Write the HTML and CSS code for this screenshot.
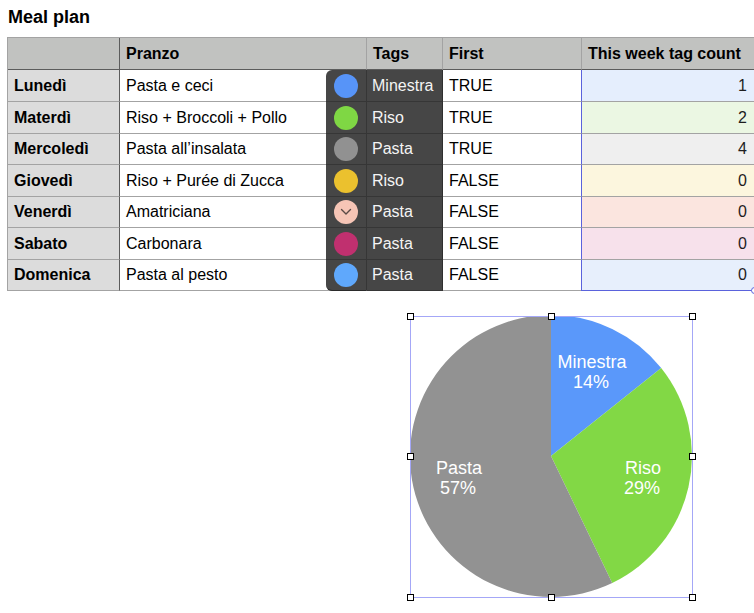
FILE: index.html
```html
<!DOCTYPE html>
<html lang="it">
<head>
<meta charset="utf-8">
<title>Meal plan</title>
<link rel="stylesheet" href="styles.css">
</head>
<body>
<div class="page">
  <h1 class="title">Meal plan</h1>
  <table class="sheet">
    <colgroup>
      <col class="c-day"><col class="c-pranzo"><col class="c-tags"><col class="c-first"><col class="c-count">
    </colgroup>
    <thead>
      <tr class="r-head">
        <th class="day"></th>
        <th>Pranzo</th>
        <th>Tags</th>
        <th class="first">First</th>
        <th class="count">This week tag count</th>
      </tr>
    </thead>
    <tbody>
      <tr class="r32">
        <th class="day">Lunedì</th>
        <td>Pasta e ceci</td>
        <td class="tag"><span class="sw sw-top"><i class="dot" style="background:#5794f8"></i></span>Minestra</td>
        <td class="first">TRUE</td>
        <td class="count" style="background:#e5eefd">1</td>
      </tr>
      <tr class="r32">
        <th class="day">Materdì</th>
        <td>Riso + Broccoli + Pollo</td>
        <td class="tag"><span class="sw"><i class="dot" style="background:#7fd744"></i></span>Riso</td>
        <td class="first">TRUE</td>
        <td class="count" style="background:#ebf7e3">2</td>
      </tr>
      <tr class="r31">
        <th class="day">Mercoledì</th>
        <td>Pasta all’insalata</td>
        <td class="tag"><span class="sw"><i class="dot" style="background:#919191"></i></span>Pasta</td>
        <td class="first">TRUE</td>
        <td class="count" style="background:#efefef">4</td>
      </tr>
      <tr class="r32">
        <th class="day">Giovedì</th>
        <td>Riso + Purée di Zucca</td>
        <td class="tag"><span class="sw"><i class="dot" style="background:#ebc12e"></i></span>Riso</td>
        <td class="first">FALSE</td>
        <td class="count" style="background:#fcf6de">0</td>
      </tr>
      <tr class="r31">
        <th class="day">Venerdì</th>
        <td>Amatriciana</td>
        <td class="tag"><span class="sw"><i class="dot" style="background:#f6c5b6"><svg class="chev" viewBox="0 0 12 8" width="12" height="8"><path d="M1.5 1.5 L6 6 L10.5 1.5" fill="none" stroke="#5a4a46" stroke-width="1.4" stroke-linecap="round" stroke-linejoin="round"/></svg></i></span>Pasta</td>
        <td class="first">FALSE</td>
        <td class="count" style="background:#fbe5df">0</td>
      </tr>
      <tr class="r32">
        <th class="day">Sabato</th>
        <td>Carbonara</td>
        <td class="tag"><span class="sw"><i class="dot" style="background:#c0306f"></i></span>Pasta</td>
        <td class="first">FALSE</td>
        <td class="count" style="background:#f7e1eb">0</td>
      </tr>
      <tr class="r31">
        <th class="day">Domenica</th>
        <td>Pasta al pesto</td>
        <td class="tag"><span class="sw sw-bottom"><i class="dot" style="background:#5fa8fc"></i></span>Pasta</td>
        <td class="first">FALSE</td>
        <td class="count count-last" style="background:#e7effc">0<span class="sel-knob"></span></td>
      </tr>
    </tbody>
  </table>

  <div class="chart">
    <svg class="pie" viewBox="0 0 283 282" width="283" height="282">
      <path d="M141 140 L141 -1 A141 141 0 0 1 251.2 52.1 Z" fill="#5a98fa"/>
      <path d="M141 140 L251.2 52.1 A141 141 0 0 1 202.2 267 Z" fill="#82d845"/>
      <path d="M141 140 L202.2 267 A141 141 0 1 1 141 -1 Z" fill="#929292"/>
      <g class="lbl">
        <text x="182" y="52">Minestra</text>
        <text x="181" y="72">14%</text>
        <text x="233" y="158">Riso</text>
        <text x="232" y="178">29%</text>
        <text x="49" y="158">Pasta</text>
        <text x="48" y="178">57%</text>
      </g>
    </svg>
    <div class="frame"></div>
    <span class="h h-tl"></span><span class="h h-tc"></span><span class="h h-tr"></span>
    <span class="h h-ml"></span><span class="h h-mr"></span>
    <span class="h h-bl"></span><span class="h h-bc"></span><span class="h h-br"></span>
  </div>
</div>
</body>
</html>
```

FILE: styles.css
```css
html, body {
  margin: 0;
  padding: 0;
  background: #ffffff;
  overflow: hidden;
}
body {
  width: 754px;
  height: 613px;
  font-family: "Liberation Sans", Arial, Helvetica, sans-serif;
  color: #000;
}
.page {
  padding: 7px 0 0 7px;
}
.title {
  margin: 0 0 10px 1px;
  font-size: 18px;
  line-height: 20px;
  font-weight: bold;
}

.sheet {
  table-layout: fixed;
  border-collapse: separate;
  border-spacing: 0;
  width: 749px;
  border-top: 1px solid #a3a3a3;
  border-left: 1px solid #a3a3a3;
  font-size: 16px;
}
.c-day { width: 112px; }
.c-pranzo { width: 247px; }
.c-tags { width: 76px; }
.c-first { width: 138px; }
.c-count { width: 175px; }

.sheet th, .sheet td {
  padding: 0 6px;
  border-right: 1px solid #a3a3a3;
  border-bottom: 1px solid #a3a3a3;
  white-space: nowrap;
  overflow: visible;
  text-align: left;
  vertical-align: middle;
  line-height: 18px;
}
.r-head { height: 32px; }
.r32 { height: 32px; }
.r31 { height: 31px; }

.r-head th {
  background: #c1c2c0;
  font-weight: bold;
  border-bottom-color: #5c5c5c;
}
.sheet th.day {
  background: #dcdcdc;
  font-weight: bold;
  border-right-color: #5c5c5c;
}
.r-head th.day {
  background: #c1c2c0;
}
.sheet .first {
  border-right: none;
}
.sheet .count {
  border-left: 1px solid #a3a3a3;
}
.sheet th.count {
  padding-left: 6px;
  text-align: left;
}
.sheet td.count {
  border-left-color: #5a62dc;
  text-align: right;
  padding-right: 8px;
  color: #1e1e1e;
}
.sheet td.count-last {
  border-bottom-color: #5a62dc;
  position: relative;
}
.sel-knob {
  position: absolute;
  right: -3px;
  bottom: -4px;
  width: 5px;
  height: 5px;
  border: 1px solid #5a62dc;
  border-radius: 50%;
  background: #fff;
}

.sheet td.tag {
  position: relative;
  background: #464646;
  color: #f4f4f4;
  border-right-color: #2f2f2f;
  border-bottom-color: #363636;
  padding-left: 5px;
}
.sw {
  position: absolute;
  top: 0;
  bottom: -1px;
  left: -41px;
  width: 40px;
  background: #464646;
  border-right: 1px solid #363636;
  border-bottom: 1px solid #363636;
  display: flex;
  align-items: center;
  justify-content: center;
}
.sw-top { border-top-left-radius: 6px; }
.sw-bottom {
  border-bottom-left-radius: 6px;
  border-bottom-color: #2a2a2a;
}
.dot {
  width: 24px;
  height: 24px;
  border-radius: 50%;
  display: flex;
  align-items: center;
  justify-content: center;
  margin-left: -1px;
}
.chev { display: block; }

.chart {
  position: relative;
  width: 283px;
  height: 282px;
  margin: 25px 0 0 403px;
}
.pie {
  display: block;
}
.lbl text {
  font-family: "Liberation Sans", Arial, Helvetica, sans-serif;
  font-size: 18px;
  fill: #ffffff;
  text-anchor: middle;
}
.frame {
  position: absolute;
  inset: 0;
  border: 1px solid #a4a7f7;
}
.h {
  position: absolute;
  width: 7px;
  height: 7px;
  box-sizing: border-box;
  border: 1px solid #000;
  background: #fff;
}
.h-tl { left: -3px; top: -3px; }
.h-tc { left: 138px; top: -3px; }
.h-tr { right: -3px; top: -3px; }
.h-ml { left: -3px; top: 137px; }
.h-mr { right: -3px; top: 137px; }
.h-bl { left: -3px; bottom: -3px; }
.h-bc { left: 138px; bottom: -3px; }
.h-br { right: -3px; bottom: -3px; }
```
